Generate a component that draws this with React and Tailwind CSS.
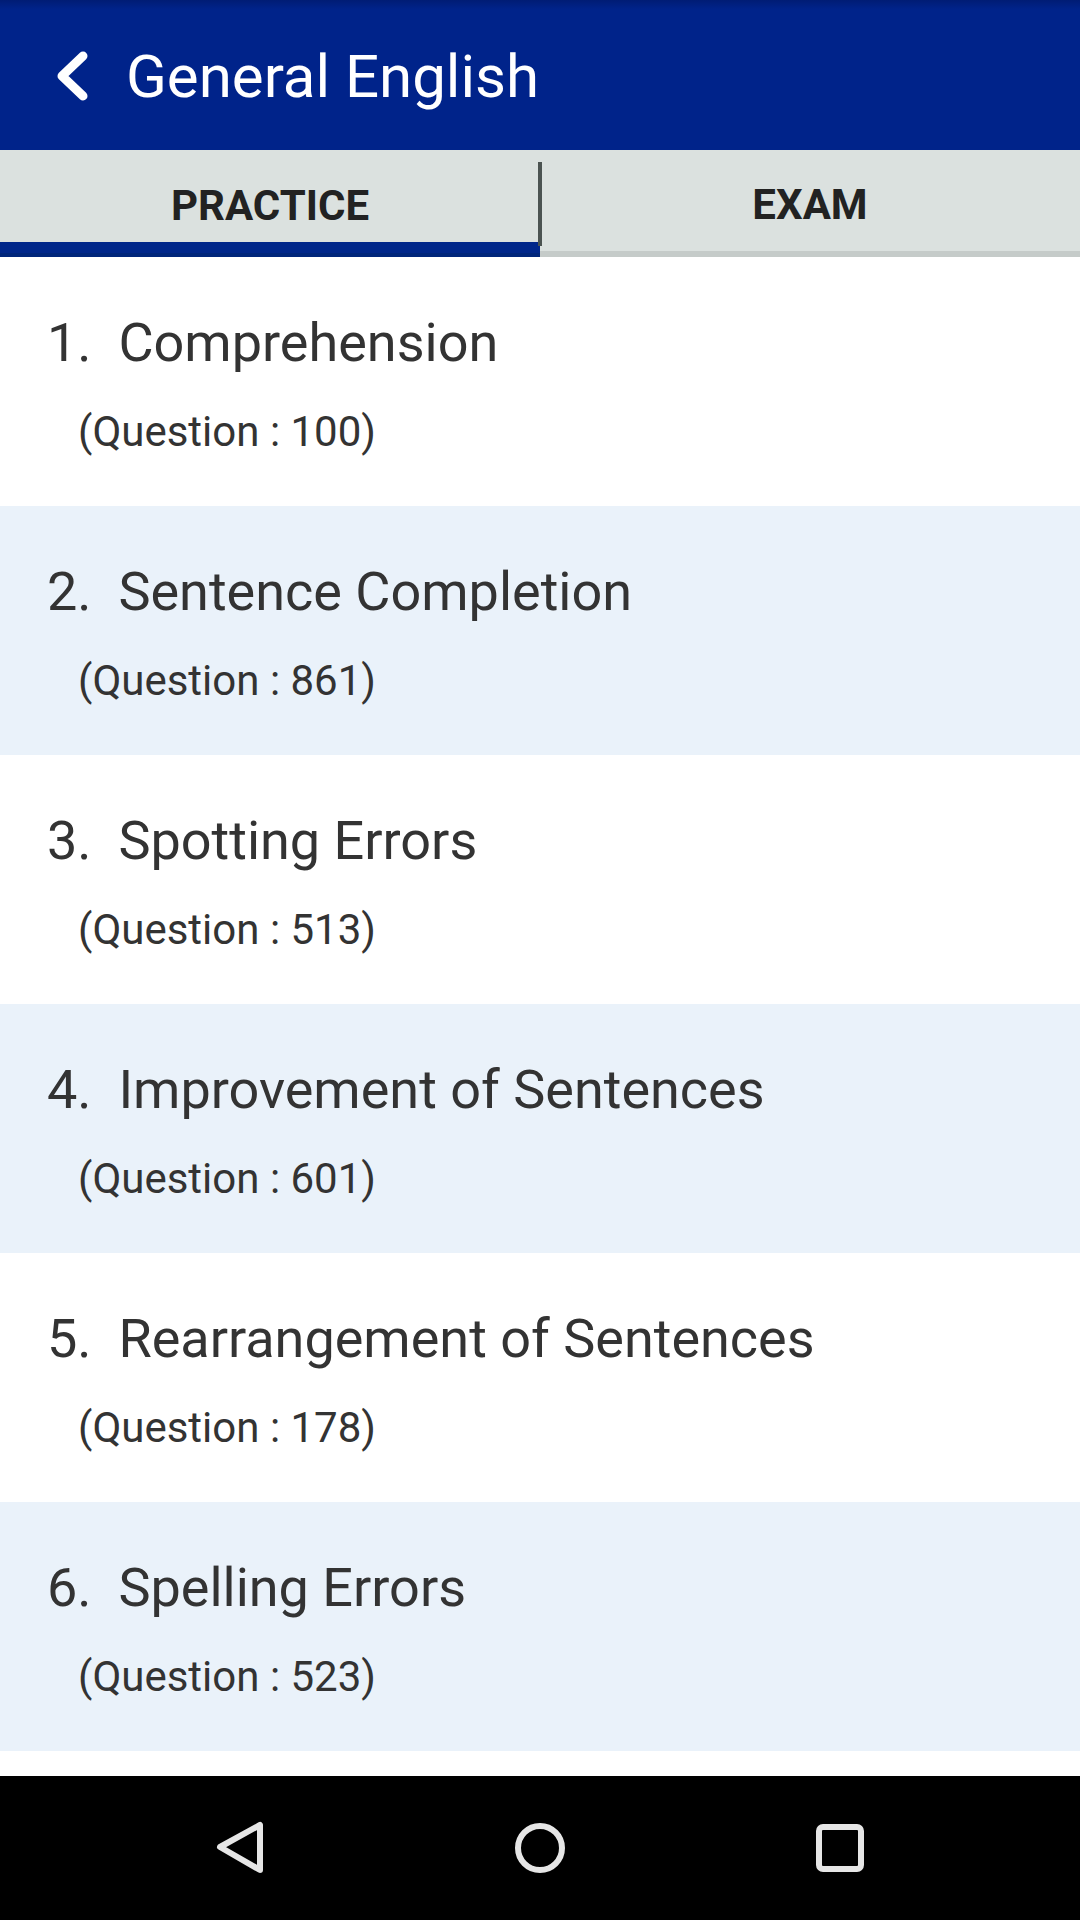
import React from "react";

const topics = [
  { n: 1, title: "Comprehension", count: 100 },
  { n: 2, title: "Sentence Completion", count: 861 },
  { n: 3, title: "Spotting Errors", count: 513 },
  { n: 4, title: "Improvement of Sentences", count: 601 },
  { n: 5, title: "Rearrangement of Sentences", count: 178 },
  { n: 6, title: "Spelling Errors", count: 523 },
];

export default function App() {
  return (
    <div className="w-[1080px] h-[1920px] flex flex-col bg-white font-['Roboto','Liberation_Sans',sans-serif] overflow-hidden">
      {/* Toolbar */}
      <div className="h-[150px] shrink-0 flex items-center bg-[linear-gradient(to_bottom,#001c74_0px,#00238a_9px,#00238a_100%)]">
        <svg width="44" height="54" viewBox="0 0 44 54" className="ml-[50px] mt-[2px]">
          <polyline
            points="33,7 12,27 33,47"
            fill="none"
            stroke="#ffffff"
            strokeWidth="9"
            strokeLinecap="round"
            strokeLinejoin="round"
          />
        </svg>
        <h1 className="ml-[32px] mt-[4px] text-[60px] leading-[70px] text-white font-normal">General English</h1>
      </div>

      {/* Tabs */}
      <div className="h-[107px] shrink-0 flex bg-[#dbe1df]">
        <div className="relative w-[540px] flex flex-col">
          <div className="flex-1 flex items-center justify-center pt-[20px]">
            <span className="text-[42px] font-bold text-[#222222] leading-none">PRACTICE</span>
          </div>
          <div className="h-[15px] bg-[#00268a] border-b-[4px] border-[#00257a]" />
          <div className="absolute right-[-2px] top-[12px] h-[84px] w-[4px] bg-[#4b5351]" />
        </div>
        <div className="flex-1 flex flex-col">
          <div className="flex-1 flex items-center justify-center pt-[8px]">
            <span className="text-[42px] font-bold text-[#222222] leading-none">EXAM</span>
          </div>
          <div className="h-[6px] bg-[#c5cbc9]" />
        </div>
      </div>

      {/* List */}
      <div className="flex-1 flex flex-col">
        {topics.map((t, i) => (
          <div
            key={t.n}
            className={`h-[249px] shrink-0 pt-[54px] ${i % 2 === 1 ? "bg-[#eaf2fa]" : "bg-white"}`}
          >
            <div className="pl-[47px] text-[54px] leading-[64px] text-[#333333] whitespace-pre">
              {t.n + ".  " + t.title}
            </div>
            <div className="pl-[78px] mt-[32px] text-[42px] leading-[50px] text-[#333333]">
              (Question : {t.count})
            </div>
          </div>
        ))}
      </div>

      {/* Navigation bar */}
      <div className="h-[144px] shrink-0 bg-black grid grid-cols-3 px-[90px] items-center">
        <div className="flex justify-center">
          <svg width="60" height="60" viewBox="0 0 60 60">
            <polygon
              points="10,29 50,7 50,52"
              fill="none"
              stroke="#e6e6e6"
              strokeWidth="6"
              strokeLinejoin="round"
            />
          </svg>
        </div>
        <div className="flex justify-center">
          <svg width="60" height="60" viewBox="0 0 60 60">
            <circle cx="30" cy="30" r="22" fill="none" stroke="#e6e6e6" strokeWidth="6" />
          </svg>
        </div>
        <div className="flex justify-center">
          <svg width="60" height="60" viewBox="0 0 60 60">
            <rect x="9" y="9" width="42" height="42" rx="4" fill="none" stroke="#e6e6e6" strokeWidth="6" />
          </svg>
        </div>
      </div>
    </div>
  );
}
